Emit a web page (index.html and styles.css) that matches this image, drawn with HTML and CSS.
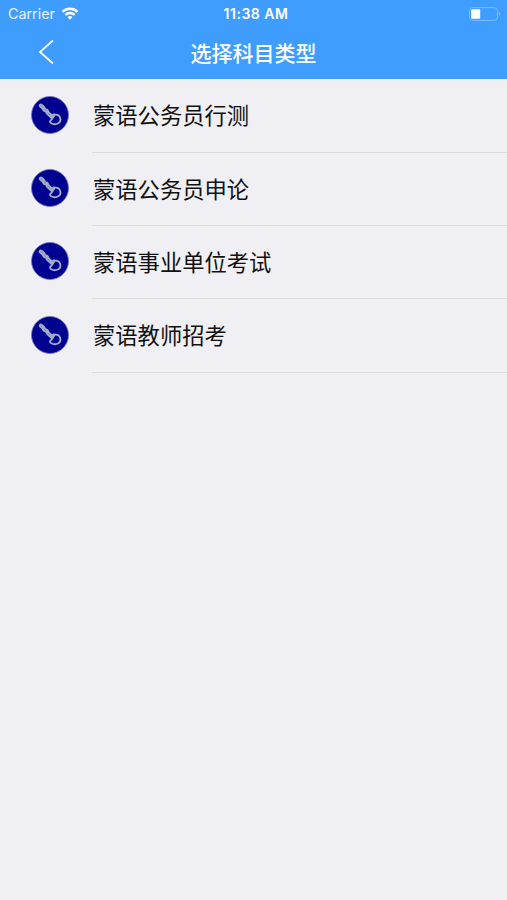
FILE: index.html
```html
<!DOCTYPE html>
<html lang="zh-CN">

<head>
    <meta charset="UTF-8" />
    <meta name="viewport" content="width=device-width, initial-scale=1.0" />
    <title>选择科目类型</title>
    <link rel="stylesheet" href="styles.css">
</head>

<body>
    <svg width="0" height="0" class="defs">
        <symbol id="logo" viewBox="0 0 38 38">
            <circle cx="19" cy="19" r="18.5" fill="#020291" stroke="#7474ba" stroke-width="0.8" />
            <g fill="none" stroke="#a3adca" stroke-linecap="round" stroke-linejoin="round">
                <path d="M9.8 9.6l2.4 2 1.2 2.2 2.400 1 1 2.200 3.200 3" stroke-width="4" />
                <path d="M9.8 9.8l1.400 1M13.500 13.600l1.200.8M17 17.200l1.600 1.400" stroke="#7c86b8" stroke-width="1" />
                <path d="M20 20l3-1.600M20 20l.8 2.600" stroke-width="2" />
                <path d="M24 18.600c2.300-.2 4.600 1.200 5.200 3.400.5 2-.2 4.300-1.800 5.200-2 1.100-5.500 1-7.200 0-1.500-.8-1.600-2-.3-3 1.600-1.100 2.400-3.200 4.100-5.600z" stroke-width="1.8" />
            </g>
        </symbol>
    </svg>

    <header>
        <div class="status">
            <div class="carrier">
                <span>Carrier</span>
                <svg width="18" height="13" viewBox="0 0 17 13" fill="none" stroke="#fff" stroke-width="2.4">
                    <path d="M1 4.8a10.6 10.6 0 0 1 15 0" />
                    <path d="M3.9 7.9a6.5 6.5 0 0 1 9.2 0" />
                    <path d="M8.5 12.7L6.1 10.300a3.4 3.4 0 0 1 4.8 0z" fill="#fff" stroke="none" />
                </svg>
            </div>
            <span class="time">11:38 AM</span>
            <svg class="battery" width="32" height="14" viewBox="0 0 32 14">
                <rect x="0.6" y="0.6" width="27.8" height="12.8" rx="3" fill="none" stroke="#7dbcff" />
                <rect x="2.2" y="2.2" width="9" height="9.6" rx="1" fill="#fff" />
                <path d="M29.8 4.8c1.9.6 1.9 3.8 0 4.4z" fill="#7dbcff" />
            </svg>
        </div>
        <div class="nav">
            <svg class="back" width="16" height="26" viewBox="0 0 16 26" fill="none" stroke="#fff" stroke-width="1.7">
                <path d="M15 1.5L2 13l13 11.5" />
            </svg>
            <h1>选择科目类型</h1>
        </div>
    </header>

    <ul class="lista">
        <li>
            <svg class="logo"><use href="#logo" /></svg>
            <span class="nombre">蒙语公务员行测</span>
        </li>
        <li>
            <svg class="logo"><use href="#logo" /></svg>
            <span class="nombre">蒙语公务员申论</span>
        </li>
        <li>
            <svg class="logo"><use href="#logo" /></svg>
            <span class="nombre">蒙语事业单位考试</span>
        </li>
        <li>
            <svg class="logo"><use href="#logo" /></svg>
            <span class="nombre">蒙语教师招考</span>
        </li>
    </ul>
</body>

</html>
```
FILE: styles.css
```css
:root {
    --bg: #efeff4;
    --primary: #3f9dff;
    --line: #dbdbdf;
}

* {
    box-sizing: border-box;
}

body {
    font-family: Inter, "Noto Sans CJK SC", sans-serif;
    background-color: var(--bg);
    color: #111;
    margin: 0;
    min-height: 100vh;
}

.defs {
    display: block;
}

header {
    height: 79.4px;
    background: var(--primary);
    color: white;
}

.status {
    display: grid;
    grid-template-columns: 1fr auto 1fr;
    align-items: center;
    height: 27px;
    padding: 0 6px 0 8px;
    font-size: 14.3px;
}

.carrier {
    display: flex;
    align-items: center;
    gap: 6px;
    color: #e6f2ff;
}

.time {
    padding-left: 3px;
    font-weight: 600;
    font-size: 14px;
    letter-spacing: 0.5px;
}

.battery {
    justify-self: end;
}

.nav {
    display: grid;
    grid-template-columns: 1fr auto 1fr;
    align-items: center;
    height: 50px;
}

.back {
    margin-left: 38px;
}

h1 {
    margin: 0;
    padding-top: 3px;
    font-size: 21px;
    font-weight: 500;
    line-height: 30px;
}

.lista {
    list-style: none;
    margin: 0;
    padding: 0;
}

.lista li {
    display: flex;
    align-items: stretch;
    height: 73.3px;
}

.logo {
    width: 38px;
    height: 38px;
    margin: 16.3px 23px 0 31px;
}

.nombre {
    flex: 1;
    border-bottom: 1px solid var(--line);
    padding-left: 1px;
    font-size: 22.3px;
    line-height: 73px;
}
```
